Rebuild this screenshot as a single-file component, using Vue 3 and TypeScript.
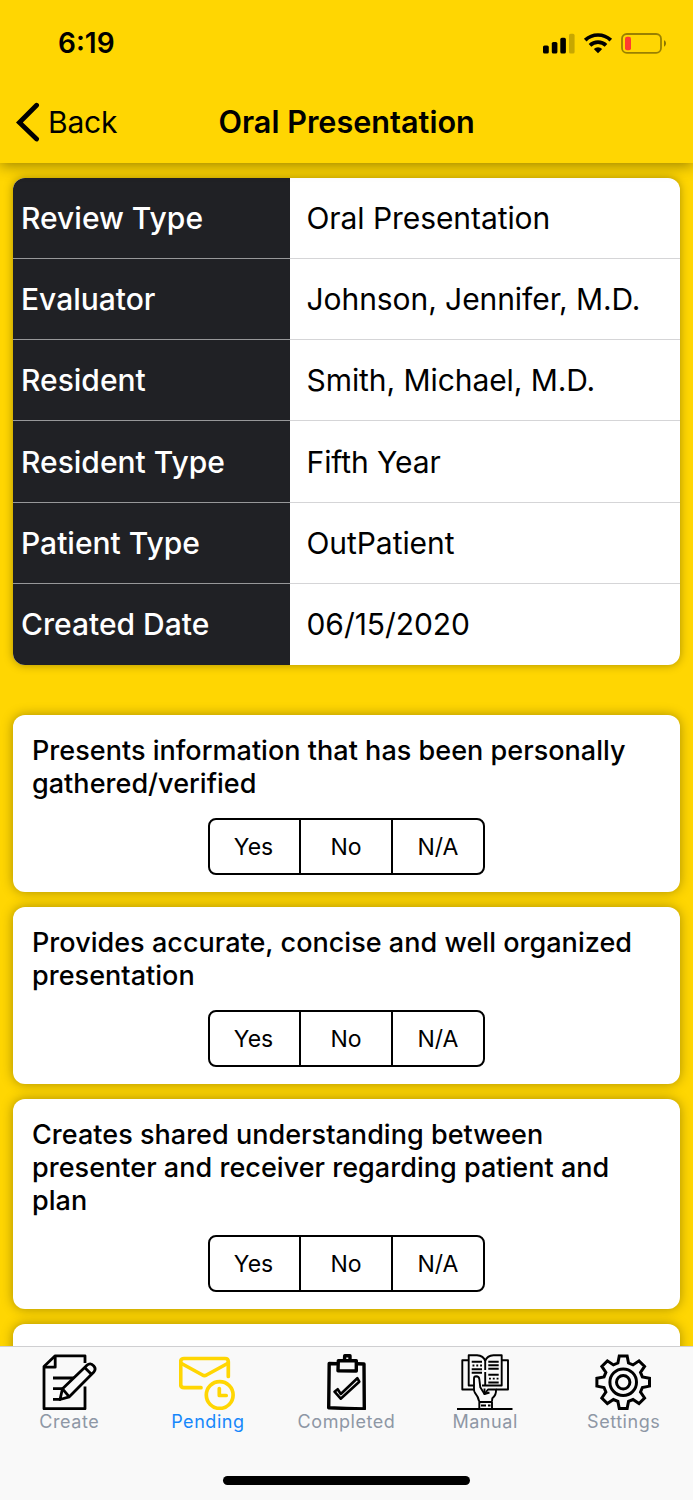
<script setup lang="ts">
interface Detail { label: string; value: string }
interface Tab { id: string; label: string; active?: boolean }

const details: Detail[] = [
  { label: 'Review Type', value: 'Oral Presentation' },
  { label: 'Evaluator', value: 'Johnson, Jennifer, M.D.' },
  { label: 'Resident', value: 'Smith, Michael, M.D.' },
  { label: 'Resident Type', value: 'Fifth Year' },
  { label: 'Patient Type', value: 'OutPatient' },
  { label: 'Created Date', value: '06/15/2020' },
]

const questions: string[][] = [
  ['Presents information that has been personally', 'gathered/verified'],
  ['Provides accurate, concise and well organized', 'presentation'],
  ['Creates shared understanding between', 'presenter and receiver regarding patient and', 'plan'],
]

const answers: string[] = ['Yes', 'No', 'N/A']

const tabs: Tab[] = [
  { id: 'create', label: 'Create' },
  { id: 'pending', label: 'Pending', active: true },
  { id: 'completed', label: 'Completed' },
  { id: 'manual', label: 'Manual' },
  { id: 'settings', label: 'Settings' },
]

// Eight-toothed gear outline centred in the 56px icon box.
const polar = (r: number, deg: number): string => {
  const a = (deg * Math.PI) / 180
  return `${(28.2 + r * Math.sin(a)).toFixed(2)},${(28.2 - r * Math.cos(a)).toFixed(2)}`
}
const gearPoints: string = Array.from({ length: 8 }, (_, k) => {
  const d = k * 45
  return [polar(19.9, d - 15.5), polar(26.6, d - 8.5), polar(26.6, d + 8.5), polar(19.9, d + 15.5)].join(' ')
}).join(' ')
</script>

<template>
  <div class="screen">
    <header class="header">
      <div class="status">
        <span class="time">6:19</span>
        <svg class="status-icons" width="126" height="24" viewBox="0 0 126 24">
          <rect x="1" y="14.5" width="5.8" height="8" rx="1.6" />
          <rect x="9.8" y="11" width="5.6" height="11.5" rx="1.6" />
          <rect x="18.3" y="6.8" width="5.6" height="15.7" rx="1.6" />
          <rect x="27" y="2.8" width="5.6" height="19.7" rx="1.6" opacity=".22" />
          <g fill="none" stroke="#000" stroke-width="3.7">
            <path d="M43.2 9.2a18.4 18.4 0 0 1 25.6 0" />
            <path d="M48 14.4a11.5 11.5 0 0 1 16 0" />
          </g>
          <path d="M56 22.2l-4.2-4.3a6.2 6.2 0 0 1 8.4 0z" />
          <rect x="80" y="3" width="39" height="18.8" rx="4.8" fill="none" stroke="#000" stroke-opacity=".4" stroke-width="1.8" />
          <rect x="83" y="5.8" width="6" height="13.4" rx="2" fill="#ff3b30" />
          <path d="M122 9.3c2.7 1.2 2.7 5 0 6.400z" opacity=".45" />
        </svg>
      </div>
      <div class="nav">
        <svg class="chevron" width="24" height="40" viewBox="0 0 24 40">
          <path d="M20.600 3.200 3.400 20.500 20.600 37" fill="none" stroke="#000" stroke-width="4.8" stroke-linecap="round" stroke-linejoin="miter" />
        </svg>
        <span class="back">Back</span>
        <h1 class="title">Oral Presentation</h1>
      </div>
    </header>

    <main class="content">
      <section class="details">
        <div v-for="d in details" :key="d.label" class="row">
          <div class="label">{{ d.label }}</div>
          <div class="value">{{ d.value }}</div>
        </div>
      </section>

      <section v-for="(lines, i) in questions" :key="i" class="card">
        <p class="question"><span v-for="line in lines" :key="line" class="line">{{ line }}</span></p>
        <div class="segments">
          <button v-for="a in answers" :key="a" class="segment">{{ a }}</button>
        </div>
      </section>
      <section class="card"></section>
    </main>

    <footer class="tabbar">
      <nav class="tabs">
        <div v-for="t in tabs" :key="t.id" class="tab" :class="{ active: t.active }">
          <svg width="56" height="56" viewBox="0 0 56 56" class="icon">
            <g v-if="t.id === 'create'" stroke-width="2.8">
              <path d="M44 9V1.800H14.200L3 12.600V54.700H44V32.500" />
              <path d="M14.200 2V13.200H3" />
              <path d="M12 24H33M12 34.700H22M12 45.300H20" />
              <path d="M21.500 34.800 45.700 11.400Q49.500 8 52.600 11.800 55.600 15 52.600 18.300L28.300 42.800 19 45.500Z" fill="#f9f9f9" />
              <path d="M21.500 34.800 28.300 42.800M43.600 13.600 50.700 20.600" />
            </g>
            <g v-else-if="t.id === 'pending'" stroke-width="3.7">
              <path d="M22 33.700H5Q1.700 33.700 1.700 30.400V7.800Q1.700 4.500 5 4.500H46Q49.300 4.500 49.300 7.800V22.500" />
              <path d="M2.500 9.500 23.500 21Q25.500 22.300 27.500 21L48.500 9.500" />
              <circle cx="40.700" cy="41" r="13.400" />
              <path d="M40.300 34.500V41.500H47.200" />
            </g>
            <g v-else-if="t.id === 'completed'" stroke-width="3.400">
              <path d="M19 9.700 11.200 9.500 10.700 53.800Q28 54.500 46.300 55L46 10 39 9.800" />
              <path d="M20.300 6.800 38.300 6.600V17L20 16.800Z" />
              <path d="M26.500 6 26.700 1.800H32V6" />
              <path d="M16.500 37.700 19.700 35.200 22.800 40 39.300 24.200 41.300 27.700 22.700 44.700Z" stroke-width="2.600" />
            </g>
            <g v-else-if="t.id === 'manual'" stroke-width="1.900">
              <path d="M11.700 6.300H5.300V35.500H17M44.700 6.300H51V35.500H39" />
              <path d="M17 31.500H11.700V1.200H20Q26.500 1.500 28.200 7 30 1.500 36.500 1.200H44.700V31.500H25M28.200 7V16M28.200 18V31.500" />
              <path d="M14.700 7.700H25M14.700 15.300H25M14.700 18.700H25M31.300 7.700H41.700M31.300 11.200H41.700M31.300 14.800H41.700M31.300 20.800H41.700M31.300 28.500H41.700" />
              <path d="M15.500 11.500H25M32 24.600H41.500" stroke-dasharray="1.900 1.900" />
              <path d="M22.200 47.500Q21.500 43 17.700 38.300 17 37.300 17 35V24.500Q17 22.200 19.200 22.200 22 22.300 22.300 25L23.300 33.300 27.500 40 31 35.500H39Q39.500 41 35.300 44.300L35 47.500" fill="#f9f9f9" />
              <path d="M27.500 34.500V40L32.500 38.500" />
              <path d="M21.700 48H35.500M22.300 48V54.500M35 48V54.500M24 51.500H29M31 51.500H33.500M0 55H55.500" />
            </g>
            <g v-else stroke-width="3" class="gear">
              <polygon :points="gearPoints" />
              <circle cx="28.200" cy="28.200" r="13.300" />
              <circle cx="28.200" cy="28.200" r="6.700" />
            </g>
          </svg>
          <span class="tab-label">{{ t.label }}</span>
        </div>
      </nav>
      <div class="home-indicator"></div>
    </footer>
  </div>
</template>

<style>
body { margin: 0; }
</style>

<style scoped>
.screen {
  width: 693px;
  height: 1500px;
  display: flex;
  flex-direction: column;
  overflow: hidden;
  background: #ffd602;
  color: #000;
  font-family: Inter, "Liberation Sans", sans-serif;
}
.header {
  flex: none;
  height: 163px;
  background: #ffd602;
  box-shadow: 0 2px 14px rgba(0, 0, 0, .42);
  z-index: 1;
}
.status {
  height: 85px;
  box-sizing: border-box;
  padding: 0 25px 0 58px;
  display: flex;
  align-items: center;
  justify-content: space-between;
}
.time { font-size: 28px; font-weight: 600; letter-spacing: 0; }
.status-icons { margin-top: 0; }
.nav {
  height: 73px;
  display: grid;
  grid-template-columns: 32px 186px auto;
  align-items: center;
  padding-left: 16px;
}
.back { font-size: 30px; letter-spacing: -.2px; }
.title { margin: 0 0 0 -15.500px; font-size: 30.600px; font-weight: 600; letter-spacing: 0; white-space: nowrap; }
.content { flex: 1; min-height: 0; padding: 15px 13px 0; }
.details {
  height: 487px;
  display: grid;
  grid-template-rows: repeat(6, 1fr);
  border-radius: 12px;
  overflow: hidden;
  background: #fff;
  margin-bottom: 50px;
  box-shadow: 0 0 10px rgba(0, 0, 0, .34);
}
.row { display: grid; grid-template-columns: 277px 1fr; font-size: 30px; }
.label, .value { display: flex; align-items: center; border-bottom: 1px solid #d5d5d7; }
.label { padding-left: 8px; color: #fff; background: #202125; border-color: #97989a; font-weight: 500; }
.value { padding-left: 16.500px; letter-spacing: -.07px; }
.row:last-child > * { border-color: transparent; }
.card {
  box-sizing: border-box;
  min-height: 177px;
  padding: 19px 19px 17px;
  margin-bottom: 15px;
  border-radius: 12px;
  background: #fff;
  box-shadow: 0 0 12px rgba(0, 0, 0, .34);
}
.question { margin: 0 0 18px; font-size: 27px; line-height: 33px; font-weight: 500; letter-spacing: .03px; }
.line { display: block; white-space: nowrap; }
.segments {
  width: 277px;
  height: 57px;
  box-sizing: border-box;
  margin: 0 auto;
  display: grid;
  grid-template-columns: 89px 92px 1fr;
  border: 2px solid #000;
  border-radius: 8px;
}
.segment {
  border: 0;
  border-left: 2px solid #000;
  padding: 0;
  background: none;
  color: #000;
  font: 400 23px Inter, sans-serif;
}
.segment:first-child { border-left: 0; padding-right: 2px; }
.tabbar {
  flex: none;
  height: 154px;
  box-sizing: border-box;
  border-top: 1px solid #cfcfd1;
  background: #f9f9f9;
  z-index: 1;
}
.tabs { display: grid; grid-template-columns: repeat(5, 1fr); height: 129px; }
.tab { display: flex; flex-direction: column; align-items: center; padding-top: 7px; color: #8e97a5; }
.icon { margin-left: -1px; fill: none; stroke: #000; stroke-linejoin: round; }
.gear { stroke-linejoin: miter; }
.active .icon { stroke: #ffd602; stroke-linecap: round; }
.active { color: #1687fb; }
.tab-label { font-size: 18px; line-height: 24px; letter-spacing: .55px; }
.home-indicator { width: 247px; height: 9px; border-radius: 5px; margin: 0 auto; background: #000; }
</style>
